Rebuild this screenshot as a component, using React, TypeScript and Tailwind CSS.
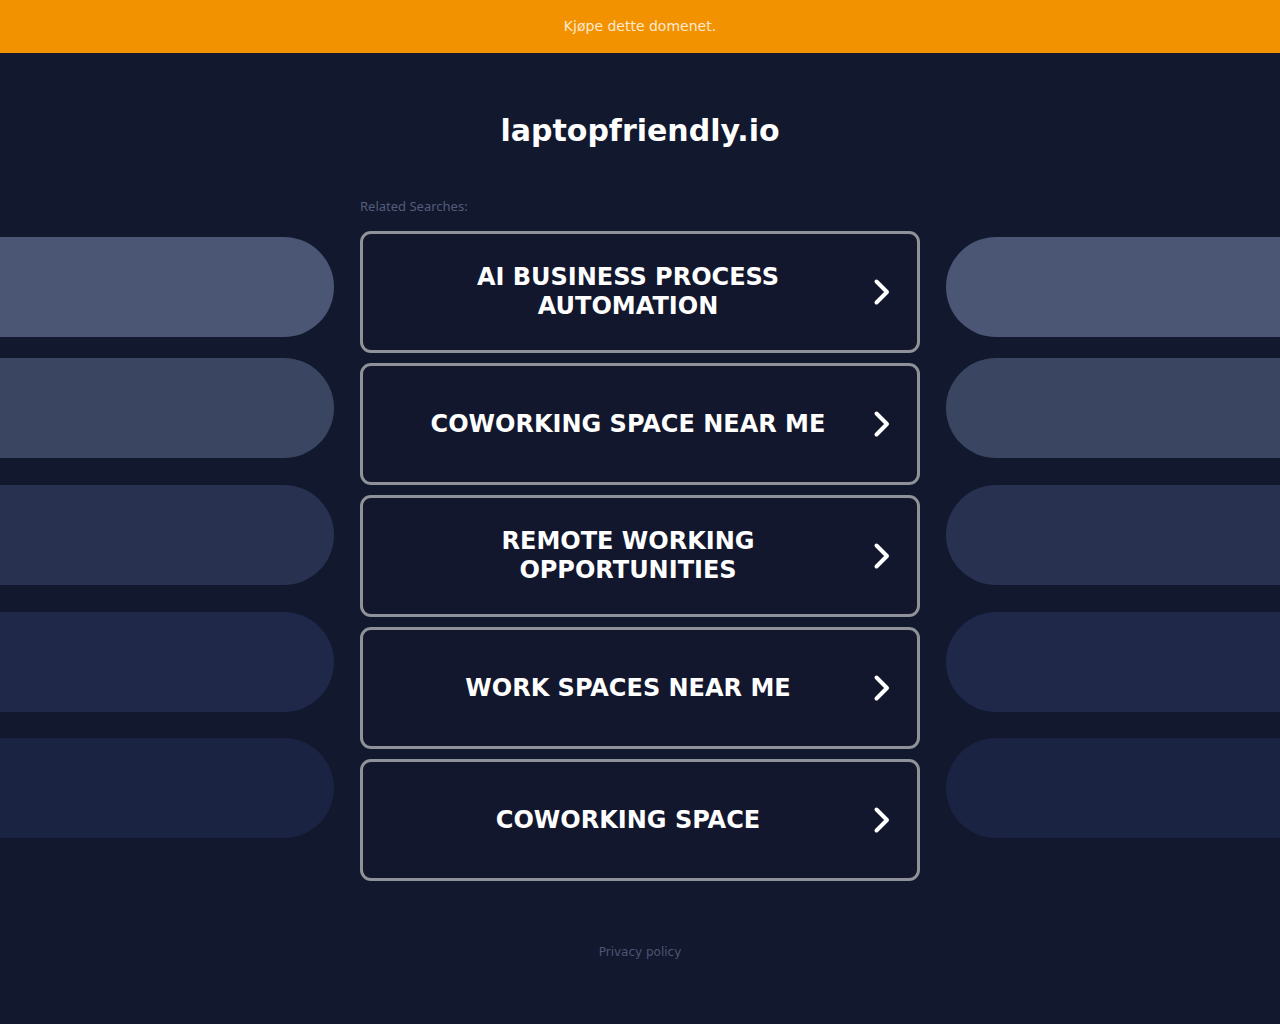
const searches = [
  'AI Business Process Automation',
  'Coworking Space Near Me',
  'Remote Working Opportunities',
  'Work Spaces Near Me',
  'Coworking Space',
]

const pills = [
  { color: 'bg-[#4b5675]', mt: 'mt-[38px]' },
  { color: 'bg-[#3a4562]', mt: 'mt-[21px]' },
  { color: 'bg-[#283150]', mt: 'mt-[27px]' },
  { color: 'bg-[#1f2848]', mt: 'mt-[27px]' },
  { color: 'bg-[#1b2342]', mt: 'mt-[26px]' },
]

const Chevron = () => (
  <svg width="18" height="28" viewBox="0 0 18 28" fill="none" aria-hidden="true">
    <path d="M3.5 3.5 L14 14 L3.5 24.5" stroke="#ffffff" strokeWidth="4" strokeLinecap="round" strokeLinejoin="round" />
  </svg>
)

const SideColumn = ({ side }: { side: 'left' | 'right' }) => (
  <div className="flex w-[334px] flex-col">
    {pills.map((pill, i) => (
      <div
        key={i}
        className={`h-[100px] ${pill.mt} ${pill.color} ${side === 'left' ? 'rounded-r-[50px]' : 'rounded-l-[50px]'}`}
      />
    ))}
  </div>
)

export default function App() {
  return (
    <div className="min-h-screen bg-[#12182e] [font-family:'DejaVu_Sans',sans-serif]">
      <a
        href="#"
        className="flex h-[53px] items-center justify-center bg-[#f39200] text-[14px] text-[#fde9cf]"
      >
        Kjøpe dette domenet.
      </a>

      <h1 className="mt-[60px] text-center text-[30px] font-bold leading-[36px] text-white">
        laptopfriendly.io
      </h1>

      <div className="mt-[50px] flex justify-between">
        <SideColumn side="left" />

        <div className="flex w-[560px] flex-col">
          <p className="text-[13px] leading-[14px] text-[#535d79] [font-family:'Noto_Sans',sans-serif]">
            Related Searches:
          </p>
          <div className="mt-[18px] flex flex-col gap-[10px]">
            {searches.map((s) => (
              <a
                key={s}
                href="#"
                className="flex h-[122px] items-center rounded-[11px] border-[3px] border-[#8f9399] bg-[#12172d] pl-[20px] pr-[26px]"
              >
                <span className="flex-1 px-6 text-center text-[24px] font-bold uppercase leading-[29px] text-white">
                  {s}
                </span>
                <Chevron />
              </a>
            ))}
          </div>
        </div>

        <SideColumn side="right" />
      </div>

      <footer className="mt-[63px] pb-10 text-center text-[12px] leading-[16px] text-[#4d5672]">
        <a href="#">Privacy policy</a>
      </footer>
    </div>
  )
}
